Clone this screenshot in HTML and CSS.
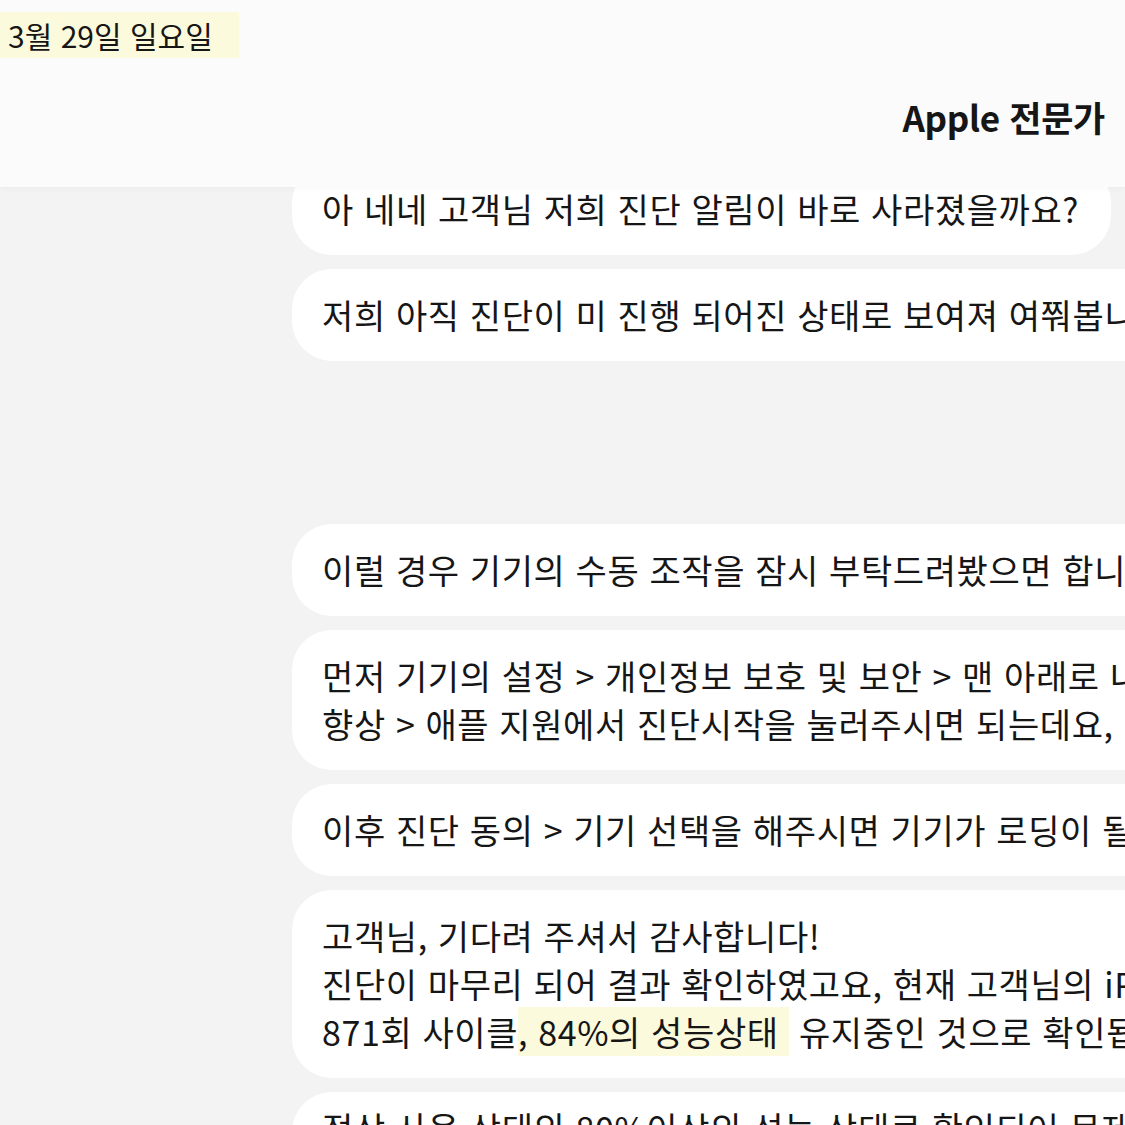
FILE: index.html
```html
<!DOCTYPE html>
<html lang="ko">
<head>
  <meta charset="UTF-8">
  <meta name="viewport" content="width=device-width, initial-scale=1.0">
  <title>Apple 전문가</title>
  <link rel="stylesheet" href="styles.css">
</head>
<body>
  <div class="screen">
    <header class="topbar">
      <div class="date"><span class="mark">3월 29일 일요일</span></div>
      <div class="title">Apple 전문가</div>
    </header>

    <main class="thread">
      <div class="group">
        <div class="bubble end">아 네네 고객님 저희 진단 알림이 바로 사라졌을까요?</div>
        <div class="bubble">저희 아직 진단이 미 진행 되어진 상태로 보여져 여쭤봅니다.</div>
      </div>

      <div class="group later">
        <div class="bubble">이럴 경우 기기의 수동 조작을 잠시 부탁드려봤으면 합니다.</div>
        <div class="bubble">먼저 기기의 설정 &gt; 개인정보 보호 및 보안 &gt; 맨 아래로 내려 분석 및<br>향상 &gt; 애플 지원에서 진단시작을 눌러주시면 되는데요,</div>
        <div class="bubble">이후 진단 동의 &gt; 기기 선택을 해주시면 기기가 로딩이 될 거예요.</div>
        <div class="bubble">고객님, 기다려 주셔서 감사합니다!<br>진단이 마무리 되어 결과 확인하였고요, 현재 고객님의 iPhone 배터리는<br>871회 사이클<span class="mark">, 84%의 성능상태&nbsp;</span> 유지중인 것으로 확인됩니다.</div>
        <div class="bubble last">정상 사용 상태의 80%이상의 성능 상태로 확인되어 문제 없이 사용 가능하세요.</div>
      </div>
    </main>
  </div>
</body>
</html>
```

FILE: styles.css
```css
body {
  margin: 0;
  padding: 0;
  background-color: #f3f3f3;
  font-family: "Noto Sans CJK KR", "Noto Sans", sans-serif;
  color: #161616;
  overflow: hidden;
}

.screen {
  position: relative;
  width: 1125px;
  height: 1125px;
  overflow: hidden;
}

/* top bar sits over the first bubble */
.topbar {
  position: absolute;
  top: 0;
  left: 0;
  right: 0;
  height: 187px;
  background-color: #fbfbfb;
  box-shadow: 0 2px 6px rgba(0, 0, 0, 0.03);
  z-index: 2;
}

.date {
  padding-top: 12px;
  font-size: 30px;
  line-height: 46px;
}

.date .mark {
  display: inline-block;
  padding: 0 26px 0 8px;
}

.mark {
  background-color: #fcfadc;
}

.title {
  text-align: right;
  padding: 36px 20px 0 0;
  font-size: 35px;
  font-weight: 700;
  line-height: 46px;
  letter-spacing: -0.3px;
}

.thread {
  padding: 163px 0 0 292px;
}

.group {
  display: flex;
  flex-direction: column;
  align-items: flex-start;
  gap: 14px;
}

.group.later {
  margin-top: 163px;
}

.bubble {
  background-color: #fff;
  border-radius: 40px;
  padding: 22px 30px;
  font-size: 34px;
  line-height: 48px;
  letter-spacing: 0.6px;
  white-space: nowrap;
}

.bubble.end {
  padding-right: 32px;
}

.bubble.last {
  padding-top: 12px;
}
```
